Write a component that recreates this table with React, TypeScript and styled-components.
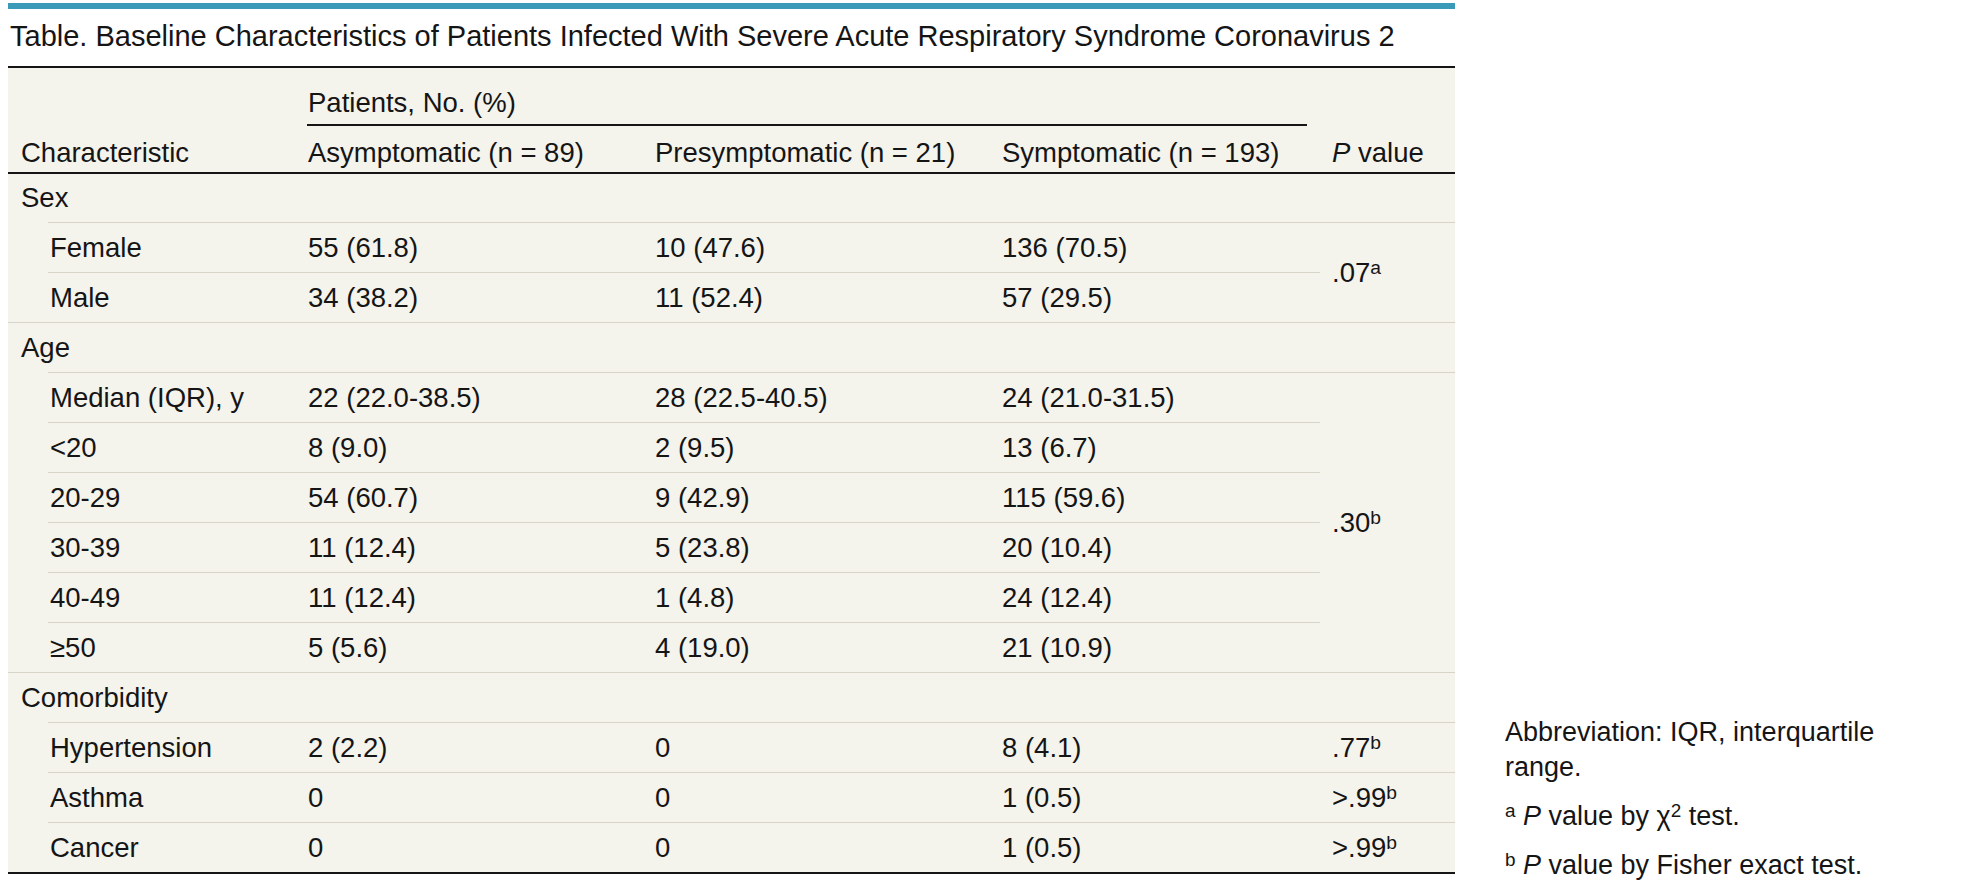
import React from 'react'
import styled, { createGlobalStyle } from 'styled-components'

type PValue = { text: string; note: string; span: number }

type Row =
  | { kind: 'group'; label: string }
  | { kind: 'item'; label: string; values: string[]; p?: PValue }

const rows: Row[] = [
  { kind: 'group', label: 'Sex' },
  { kind: 'item', label: 'Female', values: ['55 (61.8)', '10 (47.6)', '136 (70.5)'], p: { text: '.07', note: 'a', span: 2 } },
  { kind: 'item', label: 'Male', values: ['34 (38.2)', '11 (52.4)', '57 (29.5)'] },
  { kind: 'group', label: 'Age' },
  { kind: 'item', label: 'Median (IQR), y', values: ['22 (22.0-38.5)', '28 (22.5-40.5)', '24 (21.0-31.5)'], p: { text: '.30', note: 'b', span: 6 } },
  { kind: 'item', label: '<20', values: ['8 (9.0)', '2 (9.5)', '13 (6.7)'] },
  { kind: 'item', label: '20-29', values: ['54 (60.7)', '9 (42.9)', '115 (59.6)'] },
  { kind: 'item', label: '30-39', values: ['11 (12.4)', '5 (23.8)', '20 (10.4)'] },
  { kind: 'item', label: '40-49', values: ['11 (12.4)', '1 (4.8)', '24 (12.4)'] },
  { kind: 'item', label: '≥50', values: ['5 (5.6)', '4 (19.0)', '21 (10.9)'] },
  { kind: 'group', label: 'Comorbidity' },
  { kind: 'item', label: 'Hypertension', values: ['2 (2.2)', '0', '8 (4.1)'], p: { text: '.77', note: 'b', span: 1 } },
  { kind: 'item', label: 'Asthma', values: ['0', '0', '1 (0.5)'], p: { text: '>.99', note: 'b', span: 1 } },
  { kind: 'item', label: 'Cancer', values: ['0', '0', '1 (0.5)'], p: { text: '>.99', note: 'b', span: 1 } },
]

export default function App() {
  return (
    <>
      <GlobalStyle />
      <S_Page>
        <S_TableBlock>
          <S_TopBar />
          <S_Title>
            Table. Baseline Characteristics of Patients Infected With Severe Acute Respiratory Syndrome
            Coronavirus 2
          </S_Title>
          <S_Table>
            <colgroup>
              <col style={{ width: 288 }} />
              <col style={{ width: 347 }} />
              <col style={{ width: 347 }} />
              <col style={{ width: 330 }} />
              <col style={{ width: 135 }} />
            </colgroup>
            <thead>
              <S_HeadRow $height={58}>
                <S_HeadCell $first />
                <S_SpanCell colSpan={3}>
                  <S_SpanLabel>Patients, No. (%)</S_SpanLabel>
                </S_SpanCell>
                <S_HeadCell />
              </S_HeadRow>
              <S_HeadRow $height={48}>
                <S_HeadCell $first $ruled>
                  Characteristic
                </S_HeadCell>
                <S_HeadCell $ruled>Asymptomatic (n = 89)</S_HeadCell>
                <S_HeadCell $ruled>Presymptomatic (n = 21)</S_HeadCell>
                <S_HeadCell $ruled>Symptomatic (n = 193)</S_HeadCell>
                <S_HeadCell $ruled>
                  <i>P</i> value
                </S_HeadCell>
              </S_HeadRow>
            </thead>
            <tbody>
              {rows.map((row, i) =>
                row.kind === 'group' ? (
                  <S_BodyRow key={i} $first={i === 0}>
                    <S_LabelCell $first={i === 0}>{row.label}</S_LabelCell>
                    <S_Cell $first={i === 0} />
                    <S_Cell $first={i === 0} />
                    <S_Cell $first={i === 0} />
                    <S_Cell $first={i === 0} />
                  </S_BodyRow>
                ) : (
                  <S_BodyRow key={i}>
                    <S_LabelCell $sub>{row.label}</S_LabelCell>
                    {row.values.map((v, j) => (
                      <S_Cell key={j}>{v}</S_Cell>
                    ))}
                    {row.p && (
                      <S_Cell rowSpan={row.p.span}>
                        {row.p.text}
                        <S_Sup>{row.p.note}</S_Sup>
                      </S_Cell>
                    )}
                  </S_BodyRow>
                ),
              )}
            </tbody>
          </S_Table>
        </S_TableBlock>
        <S_Notes>
          <S_Note>Abbreviation: IQR, interquartile range.</S_Note>
          <S_Note>
            <S_Sup>a</S_Sup> <i>P</i> value by χ<S_Sup>2</S_Sup> test.
          </S_Note>
          <S_Note>
            <S_Sup>b</S_Sup> <i>P</i> value by Fisher exact test.
          </S_Note>
        </S_Notes>
      </S_Page>
    </>
  )
}

const LINE = '#d8d5c8'
const INK = '#151515'

const GlobalStyle = createGlobalStyle`
  html, body {
    margin: 0;
    padding: 0;
    background: #ffffff;
  }
  body {
    font-family: 'Liberation Sans', Arial, sans-serif;
    color: ${INK};
  }
`

const S_Page = styled.div`
  display: flex;
  align-items: flex-end;
  gap: 50px;
  padding: 3px 0 0 8px;
`

const S_TableBlock = styled.section`
  width: 1447px;
  flex-shrink: 0;
  padding-bottom: 9px;
`

const S_TopBar = styled.div`
  height: 6px;
  background: #3a9ab7;
`

const S_Title = styled.h1`
  margin: 10px 0 13px 2px;
  font-size: 29px;
  line-height: 34px;
  font-weight: 400;
  white-space: nowrap;
`

const S_Table = styled.table`
  width: 100%;
  table-layout: fixed;
  border-collapse: separate;
  border-spacing: 0;
  background: #f4f3ec;
  border-top: 2px solid ${INK};
  border-bottom: 2px solid ${INK};
  font-size: 27.5px;
  line-height: 30px;
`

const S_HeadRow = styled.tr<{ $height: number }>`
  height: ${p => p.$height}px;
`

const S_HeadCell = styled.th<{ $first?: boolean; $ruled?: boolean }>`
  padding: 0 12px ${p => (p.$ruled ? '4px' : '0')} ${p => (p.$first ? '13px' : '12px')};
  font-weight: 400;
  text-align: left;
  vertical-align: bottom;
  white-space: nowrap;
  border-bottom: ${p => (p.$ruled ? `2px solid ${INK}` : 'none')};
`

const S_SpanCell = styled.th`
  padding: 0 13px 0 11px;
  font-weight: 400;
  text-align: left;
  vertical-align: bottom;
`

const S_SpanLabel = styled.div`
  padding: 0 0 6px 1px;
  border-bottom: 2px solid ${INK};
`

const S_BodyRow = styled.tr<{ $first?: boolean }>`
  height: ${p => (p.$first ? 48 : 50)}px;
`

const S_Cell = styled.td<{ $first?: boolean }>`
  padding: 0 12px;
  vertical-align: middle;
  white-space: nowrap;
  border-top: ${p => (p.$first ? 'none' : `1px solid ${LINE}`)};
`

const S_LabelCell = styled.td<{ $first?: boolean; $sub?: boolean }>`
  padding: 0 12px 0 ${p => (p.$sub ? '42px' : '13px')};
  vertical-align: middle;
  white-space: nowrap;
  border-top: ${p => (p.$first ? 'none' : p.$sub ? '1px solid transparent' : `1px solid ${LINE}`)};
  background: ${p =>
    p.$sub ? `linear-gradient(${LINE}, ${LINE}) 40px 0 / calc(100% - 40px) 1px no-repeat` : 'none'};
  background-origin: border-box;
`

const S_Sup = styled.sup`
  position: relative;
  top: -0.4em;
  font-size: 0.7em;
  line-height: 0;
  vertical-align: baseline;
`

const S_Notes = styled.aside`
  width: 400px;
  font-size: 27px;
  line-height: 35px;
`

const S_Note = styled.p`
  margin: 0;

  & + & {
    margin-top: 14px;
  }
`
